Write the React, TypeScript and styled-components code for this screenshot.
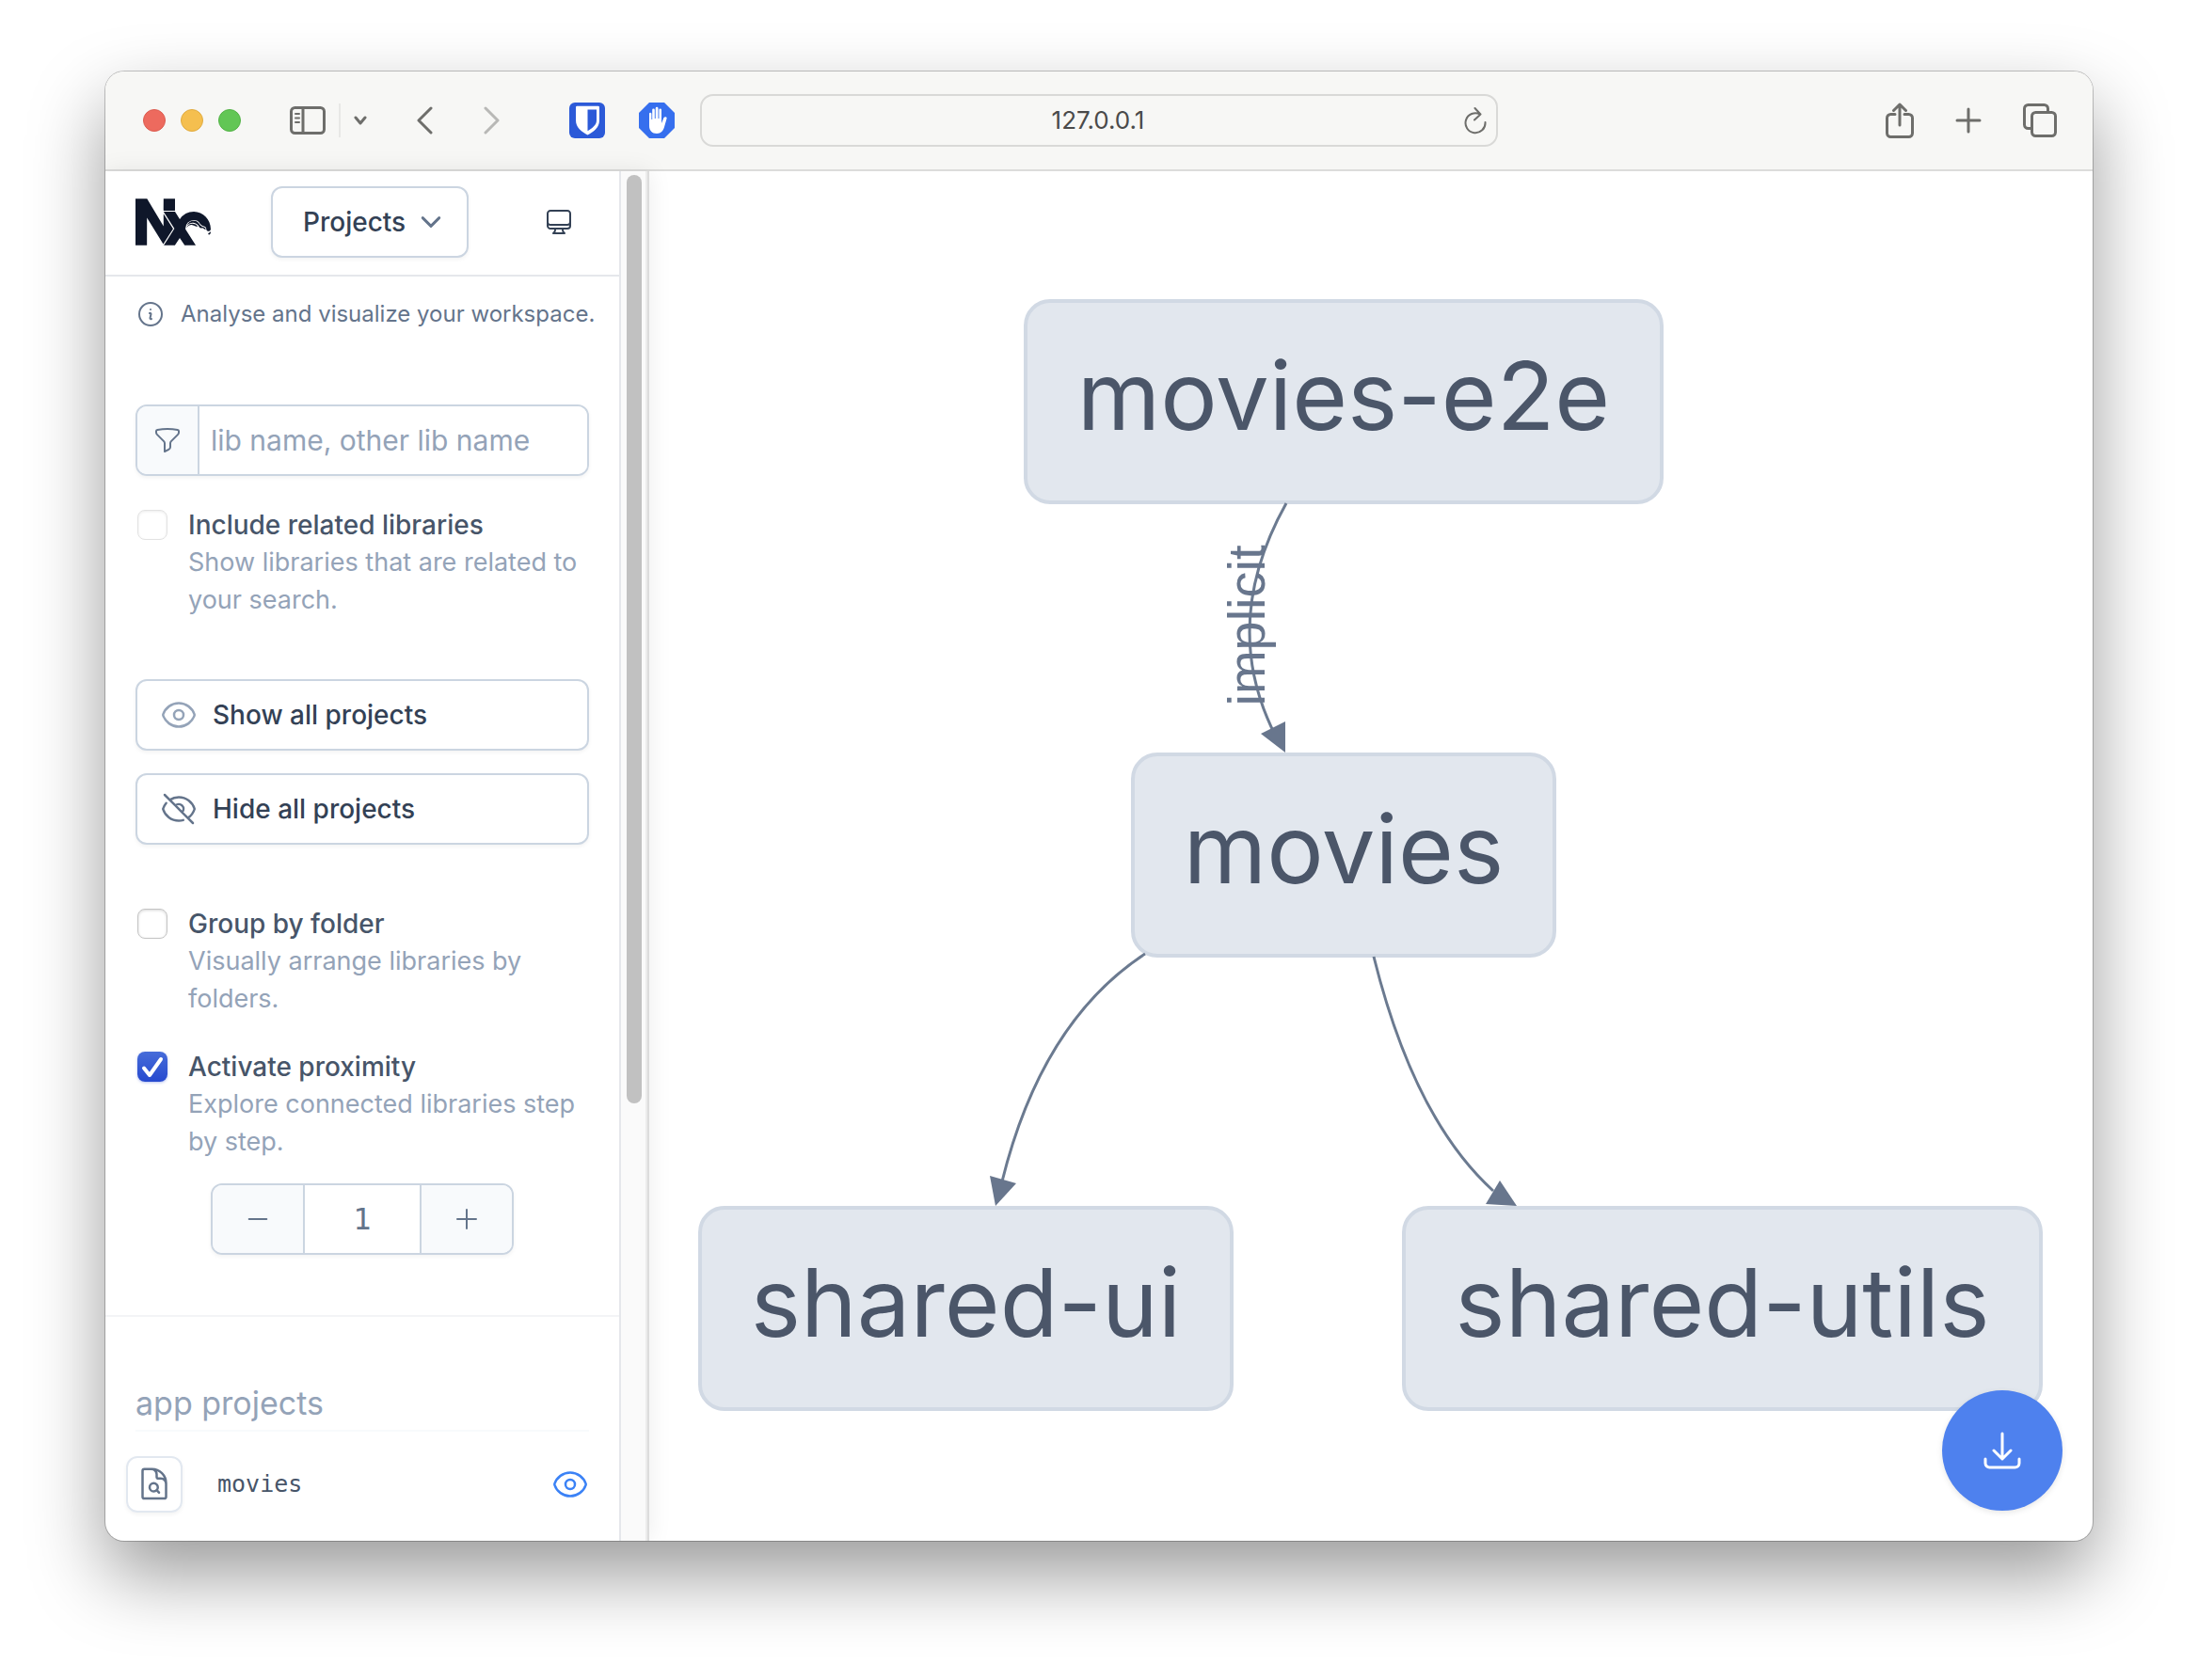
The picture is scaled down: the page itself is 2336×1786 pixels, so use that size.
import React, { useId, useState } from 'react';
import styled, { createGlobalStyle } from 'styled-components';
import {
  HiOutlineArrowDownTray,
  HiOutlineChevronDown,
  HiOutlineComputerDesktop,
  HiOutlineDocumentMagnifyingGlass,
  HiOutlineEye,
  HiOutlineEyeSlash,
  HiOutlineFunnel,
  HiOutlineInformationCircle,
  HiOutlineMinus,
  HiOutlinePlus,
} from 'react-icons/hi2';
import { SiNx } from 'react-icons/si';

const color = {
  ink: '#334155',
  label: '#475569',
  muted: '#64748b',
  faint: '#94a3b8',
  border: '#cbd5e1',
  soft: '#f8fafc',
  line: '#e5e7eb',
  blue: '#3b82f6',
  chrome: '#6e6e6b',
};

const sans = `Inter, "Liberation Sans", sans-serif`;
const mono = `"DejaVu Sans Mono", "Liberation Mono", monospace`;

const GlobalStyle = createGlobalStyle`
  *, *::before, *::after { box-sizing: border-box; }
  body { margin: 0; background: #fff; font-family: ${sans}; color: ${color.ink}; }
  button, input, select { font: inherit; color: inherit; margin: 0; }
  button { cursor: pointer; padding: 0; border: 0; background: none; }
  svg { display: block; flex: none; }
`;

const Page = styled.div`
  display: flex;
  min-height: 100vh;
  padding: 76px 112px 148px;
`;

const Window = styled.div`
  flex: 1;
  min-width: 0;
  display: flex;
  flex-direction: column;
  overflow: hidden;
  border-radius: 20px;
  background: #fff;
  box-shadow: 0 0 0 1px rgba(0, 0, 0, 0.22), 0 36px 80px rgba(0, 0, 0, 0.4);
`;

const Toolbar = styled.header`
  display: grid;
  grid-template-columns: 1fr minmax(0, 848px) 1fr;
  align-items: center;
  height: 106px;
  background: #f7f7f5;
  border-bottom: 2px solid #dcdcdb;
`;

const ToolGroup = styled.div<{ $gap: number }>`
  display: flex;
  align-items: center;
  gap: ${(p) => p.$gap}px;
`;

const Leading = styled(ToolGroup)`
  padding: 0 27px 0 40px;
  > :last-child { margin-left: auto; }
`;

const Trailing = styled(ToolGroup)`
  justify-content: flex-end;
  padding-right: 38px;
`;

const Light = styled.button<{ $fill: string; $edge: string }>`
  width: 24px;
  height: 24px;
  border-radius: 50%;
  background: ${(p) => p.$fill};
  border: 1px solid ${(p) => p.$edge};
`;

const ToolButton = styled.button<{ $dim?: boolean }>`
  color: ${color.chrome};
  opacity: ${(p) => (p.$dim ? 0.45 : 1)};
`;

const Separator = styled.span`
  width: 2px;
  height: 36px;
  background: #e8e8e6;
`;

const AddressBar = styled.div`
  display: grid;
  grid-template-columns: 32px 1fr 34px;
  align-items: center;
  height: 56px;
  border: 2px solid #d9d9d7;
  border-radius: 14px;
`;

const AddressInput = styled.input`
  grid-column: 2;
  min-width: 0;
  border: 0;
  outline: 0;
  background: none;
  text-align: center;
  font-size: 26px;
  line-height: 36px;
  color: #4a4a4a;
`;

const Body = styled.div`
  flex: 1;
  display: flex;
`;

const Aside = styled.aside`
  display: flex;
  flex: none;
  border-right: 2px solid #dcdcdc;
  box-shadow: 0 0 24px rgba(0, 0, 0, 0.08);
  z-index: 1;
`;

const Panel = styled.div`
  width: 548px;
  border-right: 2px solid ${color.line};
`;

const Track = styled.div`
  width: 28px;
  padding: 4px 4px 0 6px;
  background: #fafafa;
  border-right: 2px solid #ececec;
`;

const Thumb = styled.div`
  width: 16px;
  height: 68%;
  border-radius: 8px;
  background: #c1c1c1;
`;

const PanelHeader = styled.div`
  display: flex;
  align-items: center;
  height: 112px;
  padding: 0 48px 2px 32px;
  border-bottom: 2px solid ${color.line};
  > :last-child { margin-left: auto; }
`;

const Logo = styled(SiNx)`
  width: 80px;
  height: 50px;
  color: #0f172a;
`;

const SelectBox = styled.div`
  display: grid;
  grid-template-columns: 1fr 62px;
  align-items: center;
  width: 210px;
  margin-left: 64px;
  color: ${color.muted};
`;

const Select = styled.select`
  grid-area: 1 / 1 / 2 / 3;
  height: 76px;
  padding: 0 32px;
  appearance: none;
  border: 2px solid ${color.border};
  border-radius: 12px;
  background: #fff;
  box-shadow: 0 2px 4px rgba(0, 0, 0, 0.05);
  font-size: 28px;
  font-weight: 500;
  color: ${color.ink};
`;

const SelectIcon = styled.span`
  grid-area: 1 / 2;
  z-index: 1;
  display: flex;
  padding-left: 8px;
  pointer-events: none;
`;

const IconButton = styled.button`
  display: flex;
  color: ${color.ink};
`;

const Hint = styled.p`
  display: flex;
  align-items: center;
  gap: 16px;
  margin: 0;
  padding: 24px 0 80px;
  font-size: 24px;
  font-weight: 400;
  line-height: 32px;
  white-space: nowrap;
  color: ${color.muted};
`;

const Controls = styled.div`
  display: flex;
  flex-direction: column;
  padding: 0 32px 64px;
  border-bottom: 2px solid #f3f4f6;
`;

const Field = styled.label`
  display: flex;
  height: 76px;
  overflow: hidden;
  border: 2px solid ${color.border};
  border-radius: 12px;
  box-shadow: 0 2px 4px rgba(0, 0, 0, 0.05);
  color: ${color.muted};
`;

const FieldPrefix = styled.span`
  display: flex;
  align-items: center;
  padding: 0 16px;
  background: ${color.soft};
  border-right: 2px solid ${color.border};
`;

const FieldInput = styled.input`
  flex: 1;
  min-width: 0;
  padding: 0 12px;
  border: 0;
  outline: 0;
  background: #fff;
  font-size: 30px;
  &::placeholder { color: ${color.faint}; opacity: 1; }
`;

const Stack = styled.div<{ $gap: number; $top: number }>`
  display: flex;
  flex-direction: column;
  gap: ${(p) => p.$gap}px;
  margin-top: ${(p) => p.$top}px;
`;

const Option = styled.label`
  display: flex;
  gap: 22px;
  padding-left: 2px;
`;

const CheckSlot = styled.span`
  display: grid;
  height: 32px;
  margin-top: 4px;
  color: #fff;
  > * { grid-area: 1 / 1; }
  > svg { z-index: 1; pointer-events: none; }
`;

const Checkbox = styled.input`
  width: 32px;
  height: 32px;
  margin: 0;
  appearance: none;
  border: 1px solid #c4c4c4;
  border-radius: 8px;
  background: #fff;
  box-shadow: inset 0 1px 3px rgba(0, 0, 0, 0.16);
  &:disabled { border-color: #e2e2e2; box-shadow: inset 0 1px 3px rgba(0, 0, 0, 0.08); }
  &:checked {
    border: 0;
    background: linear-gradient(#466cd9, #2649cf);
    box-shadow: 0 1px 3px rgba(38, 73, 207, 0.35);
  }
`;

const OptionText = styled.span`
  font-size: 27px;
  line-height: 40px;
  color: ${color.faint};
`;

const OptionTitle = styled.span`
  display: block;
  font-size: 28px;
  font-weight: 500;
  color: ${color.label};
`;

const WideButton = styled.button<{ $tint: string }>`
  display: flex;
  align-items: center;
  gap: 16px;
  height: 76px;
  padding: 0 24px;
  border: 2px solid ${color.border};
  border-radius: 12px;
  background: #fff;
  box-shadow: 0 2px 4px rgba(0, 0, 0, 0.05);
  font-size: 28px;
  font-weight: 500;
  svg { color: ${(p) => p.$tint}; }
`;

const Stepper = styled.div`
  display: flex;
  align-self: center;
  width: 322px;
  height: 76px;
  margin-top: 24px;
  overflow: hidden;
  border: 2px solid ${color.border};
  border-radius: 12px;
  box-shadow: 0 2px 4px rgba(0, 0, 0, 0.05);
  color: ${color.muted};
`;

const StepButton = styled.button`
  display: flex;
  align-items: center;
  justify-content: center;
  flex: 0 0 96px;
  background: ${color.soft};
`;

const StepInput = styled.input`
  flex: 1;
  min-width: 0;
  padding: 0;
  border: solid ${color.border};
  border-width: 0 2px;
  outline: 0;
  text-align: center;
  font-family: ${mono};
  font-size: 32px;
`;

const Projects = styled.section`
  padding: 64px 32px 30px;
`;

const ProjectsTitle = styled.h2`
  margin: 0;
  border-bottom: 2px solid ${color.soft};
  font-size: 34px;
  font-weight: 400;
  line-height: 56px;
  color: ${color.faint};
`;

const ProjectList = styled.ul`
  margin: 26px 0 0;
  padding: 0;
  list-style: none;
`;

const ProjectRow = styled.li`
  display: flex;
  align-items: center;
  margin-left: -10px;
`;

const FocusButton = styled.button`
  padding: 8px;
  border: 2px solid #e2e8f0;
  border-radius: 12px;
  box-shadow: 0 2px 4px rgba(0, 0, 0, 0.05);
  color: ${color.muted};
`;

const ProjectName = styled.span`
  flex: 1;
  padding-left: 37px;
  font-family: ${mono};
  font-size: 25px;
  line-height: 40px;
  color: ${color.label};
`;

const VisibilityButton = styled.button`
  color: ${color.blue};
`;

const Graph = styled.main`
  position: relative;
  flex: 1;
  min-width: 0;
  display: flex;
  align-items: center;
  justify-content: center;
`;

const Canvas = styled.div`
  position: relative;
  flex: none;
  width: 1430px;
  height: 1184px;
`;

const Edges = styled.svg`
  position: absolute;
  inset: 0;
  width: 100%;
  height: 100%;
  path { fill: none; stroke: #6b7a90; stroke-width: 3; }
  polygon { fill: #68768d; }
  text {
    fill: #68768d;
    font-family: "Liberation Sans", sans-serif;
    font-size: 56px;
    text-anchor: middle;
  }
`;

const Node = styled.div<{ $x: number; $y: number; $w: number }>`
  position: absolute;
  left: ${(p) => p.$x}px;
  top: ${(p) => p.$y}px;
  width: ${(p) => p.$w}px;
  height: 218px;
  padding-bottom: 14px;
  display: flex;
  align-items: center;
  justify-content: center;
  border: 4px solid #d1d9e4;
  border-radius: 28px;
  background: #e2e7ee;
  font-size: 101px;
  font-weight: 400;
  white-space: nowrap;
  color: #4b5669;
`;

const DownloadButton = styled.button`
  position: absolute;
  right: 32px;
  bottom: 32px;
  display: flex;
  align-items: center;
  justify-content: center;
  width: 128px;
  height: 128px;
  border-radius: 50%;
  background: #4e81ee;
  box-shadow: 0 2px 6px rgba(0, 0, 0, 0.1);
  color: #fff;
`;

const SidebarIcon = () => (
  <svg width="38" height="30" viewBox="0 0 38 30" fill="none" stroke="currentColor" strokeWidth="3" strokeLinecap="round">
    <rect x="1.5" y="1.5" width="35" height="27" rx="4" />
    <path d="M14 2v26" />
    <path d="M6 8h4M6 12.500h4M6 17h4" strokeWidth="2" />
  </svg>
);

const Stroke = ({ w, h, d, width = 3 }: { w: number; h: number; d: string; width?: number }) => (
  <svg width={w} height={h} viewBox={`0 0 ${w} ${h}`} fill="none" stroke="currentColor" strokeWidth={width} strokeLinecap="round" strokeLinejoin="round">
    <path d={d} />
  </svg>
);

const ShieldIcon = () => (
  <svg width="38" height="38" viewBox="0 0 38 38">
    <rect width="38" height="38" rx="6" fill="#2c5ad8" />
    <path d="M7 5q0-1.200 1.200-1.200h22.600q1.200 0 1.200 1.200V19c0 7.500-6.500 12.500-12.500 15.500C13.500 31.500 7 26.500 7 19z" fill="#fff" />
    <path d="M19.500 7.500H29V19c0 4.500-4 8-9.500 11.200z" fill="#2c5ad8" />
  </svg>
);

const HandIcon = () => (
  <svg width="38" height="38" viewBox="0 0 38 38">
    <path d="M11 0h16l11 11v16L27 38H11L0 27V11z" fill="#366fee" />
    <path
      d="M11 22V12a1.200 1.200 0 0 1 2.400 0V18h.8V7.800a1.300 1.300 0 0 1 2.600 0V17h.9V6.200a1.400 1.400 0 0 1 2.800 0V17h.9V7.800a1.300 1.300 0 0 1 2.600 0V22l2-4.800c.6-1.500 1.500-2.200 2.900-1.700.8.300.9 1 .6 1.800L27 26c-1.200 4-3.500 7-8 7-5 0-8-3.500-8-8z"
      fill="#fff"
    />
  </svg>
);

const nodes = [
  { name: 'movies-e2e', x: 346, y: 0, w: 680 },
  { name: 'movies', x: 460, y: 482, w: 452 },
  { name: 'shared-ui', x: 0, y: 964, w: 569 },
  { name: 'shared-utils', x: 748, y: 964, w: 681 },
];

const edges = [
  { line: 'M625 217Q553 346 614 465', head: '624,449 598,462 624,482' },
  { line: 'M475 696Q365 768 323 938', head: '310,932 338,940 316,964' },
  { line: 'M718 699Q761 872 845 948', head: '852,937 837,962 870,964' },
];

type CheckOptionProps = {
  title: string;
  text: string;
  checked: boolean;
  disabled?: boolean;
  onChange?: (value: boolean) => void;
};

function CheckOption({ title, text, checked, disabled, onChange }: CheckOptionProps) {
  const id = useId();
  return (
    <Option htmlFor={id}>
      <CheckSlot>
        <Checkbox
          id={id}
          type="checkbox"
          checked={checked}
          disabled={disabled}
          onChange={(e) => onChange?.(e.target.checked)}
        />
        {checked && <Stroke w={32} h={32} d="M7 17.500l6 7.500L25 8" width={4} />}
      </CheckSlot>
      <OptionText>
        <OptionTitle>{title}</OptionTitle>
        {text}
      </OptionText>
    </Option>
  );
}

export default function App() {
  const [filter, setFilter] = useState('');
  const [grouped, setGrouped] = useState(false);
  const [proximity, setProximity] = useState(true);
  const [depth, setDepth] = useState(1);

  return (
    <>
      <GlobalStyle />
      <Page>
        <Window>
          <Toolbar>
            <Leading $gap={52}>
              <ToolGroup $gap={16}>
                <Light $fill="#ed6a5e" $edge="#dc5c50" aria-label="Close" />
                <Light $fill="#f5bf4f" $edge="#e0ab40" aria-label="Minimize" />
                <Light $fill="#62c655" $edge="#52b245" aria-label="Zoom" />
              </ToolGroup>
              <ToolGroup $gap={14}>
                <ToolButton aria-label="Show sidebar"><SidebarIcon /></ToolButton>
                <Separator />
                <ToolButton aria-label="Tab groups"><Stroke w={14} h={10} d="M2 2l5 6 5-6" /></ToolButton>
              </ToolGroup>
              <ToolGroup $gap={54}>
                <ToolButton aria-label="Back"><Stroke w={18} h={30} d="M16 2L3 15l13 13" /></ToolButton>
                <ToolButton $dim aria-label="Forward"><Stroke w={18} h={30} d="M2 2l13 13L2 28" /></ToolButton>
              </ToolGroup>
              <ToolGroup $gap={36}>
                <ToolButton aria-label="Password manager"><ShieldIcon /></ToolButton>
                <ToolButton aria-label="Content blocker"><HandIcon /></ToolButton>
              </ToolGroup>
            </Leading>
            <AddressBar>
              <AddressInput aria-label="Address" defaultValue="127.0.0.1" />
              <ToolButton aria-label="Reload">
                <Stroke w={24} h={30} d="M17 8.500A10.500 10.500 0 1 0 22.500 17M11.500 2l6 6.500-6.500 6" width={2} />
              </ToolButton>
            </AddressBar>
            <Trailing $gap={44}>
              <ToolButton aria-label="Share">
                <Stroke w={30} h={38} d="M10 12.500H5.500a4 4 0 0 0-4 4v16a4 4 0 0 0 4 4h19a4 4 0 0 0 4-4v-16a4 4 0 0 0-4-4H20M15 24V2M8.500 8.500L15 2l6.500 6.500" />
              </ToolButton>
              <ToolButton aria-label="New tab"><Stroke w={28} h={28} d="M14 2v24M2 14h24" /></ToolButton>
              <ToolButton aria-label="Tab overview">
                <Stroke w={36} h={36} d="M9 26.500H5.500a4 4 0 0 1-4-4v-17a4 4 0 0 1 4-4h17a4 4 0 0 1 4 4V9M13.500 9.500h17a4 4 0 0 1 4 4v17a4 4 0 0 1-4 4h-17a4 4 0 0 1-4-4v-17a4 4 0 0 1 4-4z" />
              </ToolButton>
            </Trailing>
          </Toolbar>

          <Body>
            <Aside>
              <Panel>
                <PanelHeader>
                  <Logo viewBox="0 4.500 24 15" />
                  <SelectBox>
                    <Select aria-label="View" defaultValue="projects">
                      <option value="projects">Projects</option>
                      <option value="tasks">Tasks</option>
                    </Select>
                    <SelectIcon><HiOutlineChevronDown size={28} strokeWidth={2.5} /></SelectIcon>
                  </SelectBox>
                  <IconButton aria-label="Theme"><HiOutlineComputerDesktop size={32} /></IconButton>
                </PanelHeader>

                <Controls>
                  <Hint>
                    <HiOutlineInformationCircle size={32} />
                    Analyse and visualize your workspace.
                  </Hint>
                  <Field>
                    <FieldPrefix><HiOutlineFunnel size={32} /></FieldPrefix>
                    <FieldInput
                      aria-label="Filter projects"
                      placeholder="lib name, other lib name"
                      value={filter}
                      onChange={(e) => setFilter(e.target.value)}
                    />
                  </Field>
                  <Stack $gap={32} $top={32}>
                    <CheckOption
                      title="Include related libraries"
                      text="Show libraries that are related to your search."
                      checked={false}
                      disabled
                    />
                  </Stack>
                  <Stack $gap={24} $top={64}>
                    <WideButton $tint={color.faint}><HiOutlineEye size={40} />Show all projects</WideButton>
                    <WideButton $tint={color.muted}><HiOutlineEyeSlash size={40} />Hide all projects</WideButton>
                  </Stack>
                  <Stack $gap={32} $top={64}>
                    <CheckOption
                      title="Group by folder"
                      text="Visually arrange libraries by folders."
                      checked={grouped}
                      onChange={setGrouped}
                    />
                    <CheckOption
                      title="Activate proximity"
                      text="Explore connected libraries step by step."
                      checked={proximity}
                      onChange={setProximity}
                    />
                  </Stack>
                  <Stepper>
                    <StepButton aria-label="Decrease" onClick={() => setDepth(Math.max(1, depth - 1))}>
                      <HiOutlineMinus size={32} />
                    </StepButton>
                    <StepInput aria-label="Proximity" value={depth} readOnly />
                    <StepButton aria-label="Increase" onClick={() => setDepth(depth + 1)}>
                      <HiOutlinePlus size={32} />
                    </StepButton>
                  </Stepper>
                </Controls>

                <Projects>
                  <ProjectsTitle>app projects</ProjectsTitle>
                  <ProjectList>
                    <ProjectRow>
                      <FocusButton aria-label="Focus on movies"><HiOutlineDocumentMagnifyingGlass size={40} /></FocusButton>
                      <ProjectName>movies</ProjectName>
                      <VisibilityButton aria-label="Toggle movies"><HiOutlineEye size={40} /></VisibilityButton>
                    </ProjectRow>
                  </ProjectList>
                </Projects>
              </Panel>
              <Track><Thumb /></Track>
            </Aside>

            <Graph>
              <Canvas>
                {nodes.map((n) => (
                  <Node key={n.name} $x={n.x} $y={n.y} $w={n.w}>{n.name}</Node>
                ))}
                <Edges viewBox="0 0 1430 1184">
                  {edges.map((e) => (
                    <g key={e.line}>
                      <path d={e.line} />
                      <polygon points={e.head} />
                    </g>
                  ))}
                  <text transform="translate(602 347) rotate(-90)">implicit</text>
                </Edges>
              </Canvas>
              <DownloadButton aria-label="Download graph"><HiOutlineArrowDownTray size={48} /></DownloadButton>
            </Graph>
          </Body>
        </Window>
      </Page>
    </>
  );
}
